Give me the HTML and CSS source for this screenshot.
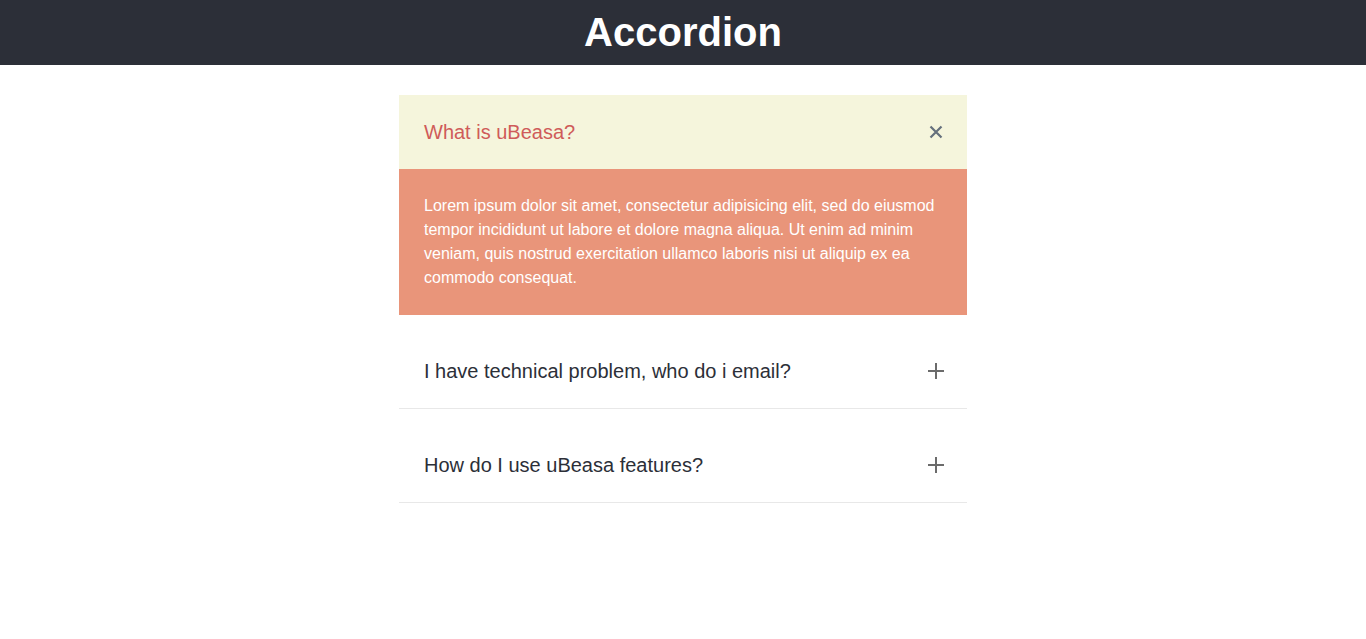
FILE: index.html
```html
<!DOCTYPE html>
<html lang="en">
<head>
<meta charset="utf-8">
<title>Accordion</title>
<link rel="stylesheet" href="styles.css">
</head>
<body>
<header class="topbar">
  <h1 class="topbar-title">Accordion</h1>
</header>
<main class="accordion">
  <section class="acc-item is-open">
    <div class="acc-head">
      <span class="acc-question">What is uBeasa?</span>
      <svg class="acc-icon icon-close" width="14" height="14" viewBox="0 0 14 14"><path d="M1.5 1.5L12.5 12.5M12.5 1.5L1.5 12.5" stroke="#65707c" stroke-width="2.2" fill="none"/></svg>
    </div>
    <div class="acc-body">
      <p>Lorem ipsum dolor sit amet, consectetur adipisicing elit, sed do eiusmod tempor incididunt ut labore et dolore magna aliqua. Ut enim ad minim veniam, quis nostrud exercitation ullamco laboris nisi ut aliquip ex ea commodo consequat.</p>
    </div>
  </section>
  <section class="acc-item">
    <div class="acc-head">
      <span class="acc-question">I have technical problem, who do i email?</span>
      <svg class="acc-icon" width="18" height="18" viewBox="0 0 18 18"><path d="M9 1V17M1 9H17" stroke="#6b6b6b" stroke-width="2" fill="none"/></svg>
    </div>
  </section>
  <section class="acc-item">
    <div class="acc-head">
      <span class="acc-question">How do I use uBeasa features?</span>
      <svg class="acc-icon" width="18" height="18" viewBox="0 0 18 18"><path d="M9 1V17M1 9H17" stroke="#6b6b6b" stroke-width="2" fill="none"/></svg>
    </div>
  </section>
</main>
</body>
</html>
```
FILE: styles.css
```css
* { box-sizing: border-box; }
html, body { margin: 0; padding: 0; background: #fff; }
body { font-family: "Liberation Sans", Arial, sans-serif; color: #2c2f38; }

.topbar {
  background: #2c2f38;
  height: 65px;
  display: flex;
  align-items: center;
  justify-content: center;
}
.topbar-title {
  margin: 0;
  color: #fff;
  font-size: 40px;
  font-weight: 700;
  line-height: 65px;
}

.accordion {
  width: 568px;
  margin: 30px auto 0;
  display: flex;
  flex-direction: column;
  gap: 19px;
}

.acc-item { border-bottom: 1px solid #e8e8e8; }
.acc-item.is-open { border-bottom: none; }

.acc-head {
  height: 74px;
  padding: 0 22px 0 25px;
  display: flex;
  align-items: center;
  justify-content: space-between;
}
.acc-question {
  font-size: 20px;
  color: #2c2f38;
}
.is-open .acc-head { background: #f5f5dc; }
.is-open .acc-question { color: #cf5b59; }

.acc-icon { display: block; }
.icon-close { margin-right: 2px; }

.acc-body {
  background: #e9957a;
  padding: 25px;
}
.acc-body p {
  margin: 0;
  color: #fff;
  font-size: 16px;
  line-height: 24px;
}
```
